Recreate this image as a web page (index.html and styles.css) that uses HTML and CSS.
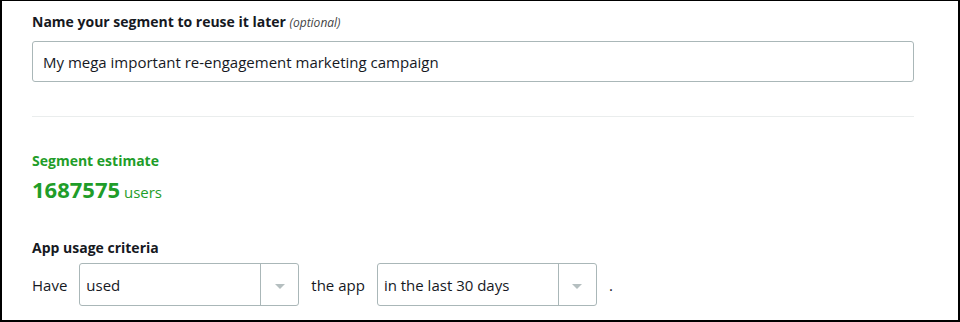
FILE: index.html
```html
<!DOCTYPE html>
<html lang="en">
<head>
  <meta charset="UTF-8" />
  <meta name="viewport" content="width=device-width, initial-scale=1.0" />
  <title>Create segment</title>
  <link rel="stylesheet" href="styles.css">
</head>
<body>
  <div class="panel">
    <label class="field-label" for="segment-name">Name your segment to reuse it later <em>(optional)</em></label>
    <input class="text-input" type="text" id="segment-name" value="My mega important re-engagement marketing campaign" />

    <hr class="divider" />

    <div class="estimate">
      <div class="estimate-title">Segment estimate</div>
      <div class="estimate-value"><strong>1687575</strong> users</div>
    </div>

    <div class="criteria">
      <div class="criteria-title">App usage criteria</div>
      <div class="criteria-row">
        <span>Have</span>
        <div class="select">
          <span class="select-value">used</span>
          <span class="select-arrow"></span>
        </div>
        <span>the app</span>
        <div class="select">
          <span class="select-value">in the last 30 days</span>
          <span class="select-arrow"></span>
        </div>
        <span>.</span>
      </div>
    </div>
  </div>
</body>
</html>
```

FILE: styles.css
```css
body {
  margin: 0;
  font-family: "Open Sans", Arial, sans-serif;
  color: #16191f;
  background: #fff;
}

.panel {
  box-sizing: border-box;
  width: 960px;
  height: 322px;
  border: 2px solid #000;
  border-top-width: 1px;
  padding: 11px 44px 0 30px;
}

.field-label {
  display: block;
  font-size: 14px;
  font-weight: bold;
  line-height: 20px;
}

.field-label em {
  font-size: 12px;
  font-weight: normal;
  color: #444;
}

.text-input {
  box-sizing: border-box;
  display: block;
  width: 100%;
  height: 41px;
  margin-top: 8px;
  padding: 0 10px;
  border: 1px solid #aab7b8;
  border-radius: 3px;
  font-family: inherit;
  font-size: 15px;
  color: #16191f;
}

.divider {
  border: none;
  border-top: 1px solid #eaeded;
  margin: 34px 0 0;
}

.estimate {
  margin-top: 34px;
  color: #1f9d29;
}

.estimate-title {
  font-size: 14px;
  font-weight: bold;
  line-height: 20px;
}

.estimate-value {
  font-size: 15px;
  margin-top: 3px;
}

.estimate-value strong {
  font-size: 22px;
}

.criteria {
  margin-top: 34px;
}

.criteria-title {
  font-size: 14px;
  font-weight: bold;
  line-height: 20px;
}

.criteria-row {
  display: flex;
  align-items: center;
  gap: 12px;
  margin-top: 5px;
  font-size: 15px;
}

.select {
  box-sizing: border-box;
  display: flex;
  width: 220px;
  height: 43px;
  border: 1px solid #aab7b8;
  border-radius: 3px;
}

.select-value {
  flex: 1;
  display: flex;
  align-items: center;
  padding-left: 6px;
}

.select-arrow {
  width: 37px;
  border-left: 1px solid #aab7b8;
  display: flex;
  align-items: center;
  justify-content: center;
}

.select-arrow::after {
  content: "";
  border-left: 5px solid transparent;
  border-right: 5px solid transparent;
  border-top: 5px solid #b5bfc0;
  margin-top: 3px;
}
```
